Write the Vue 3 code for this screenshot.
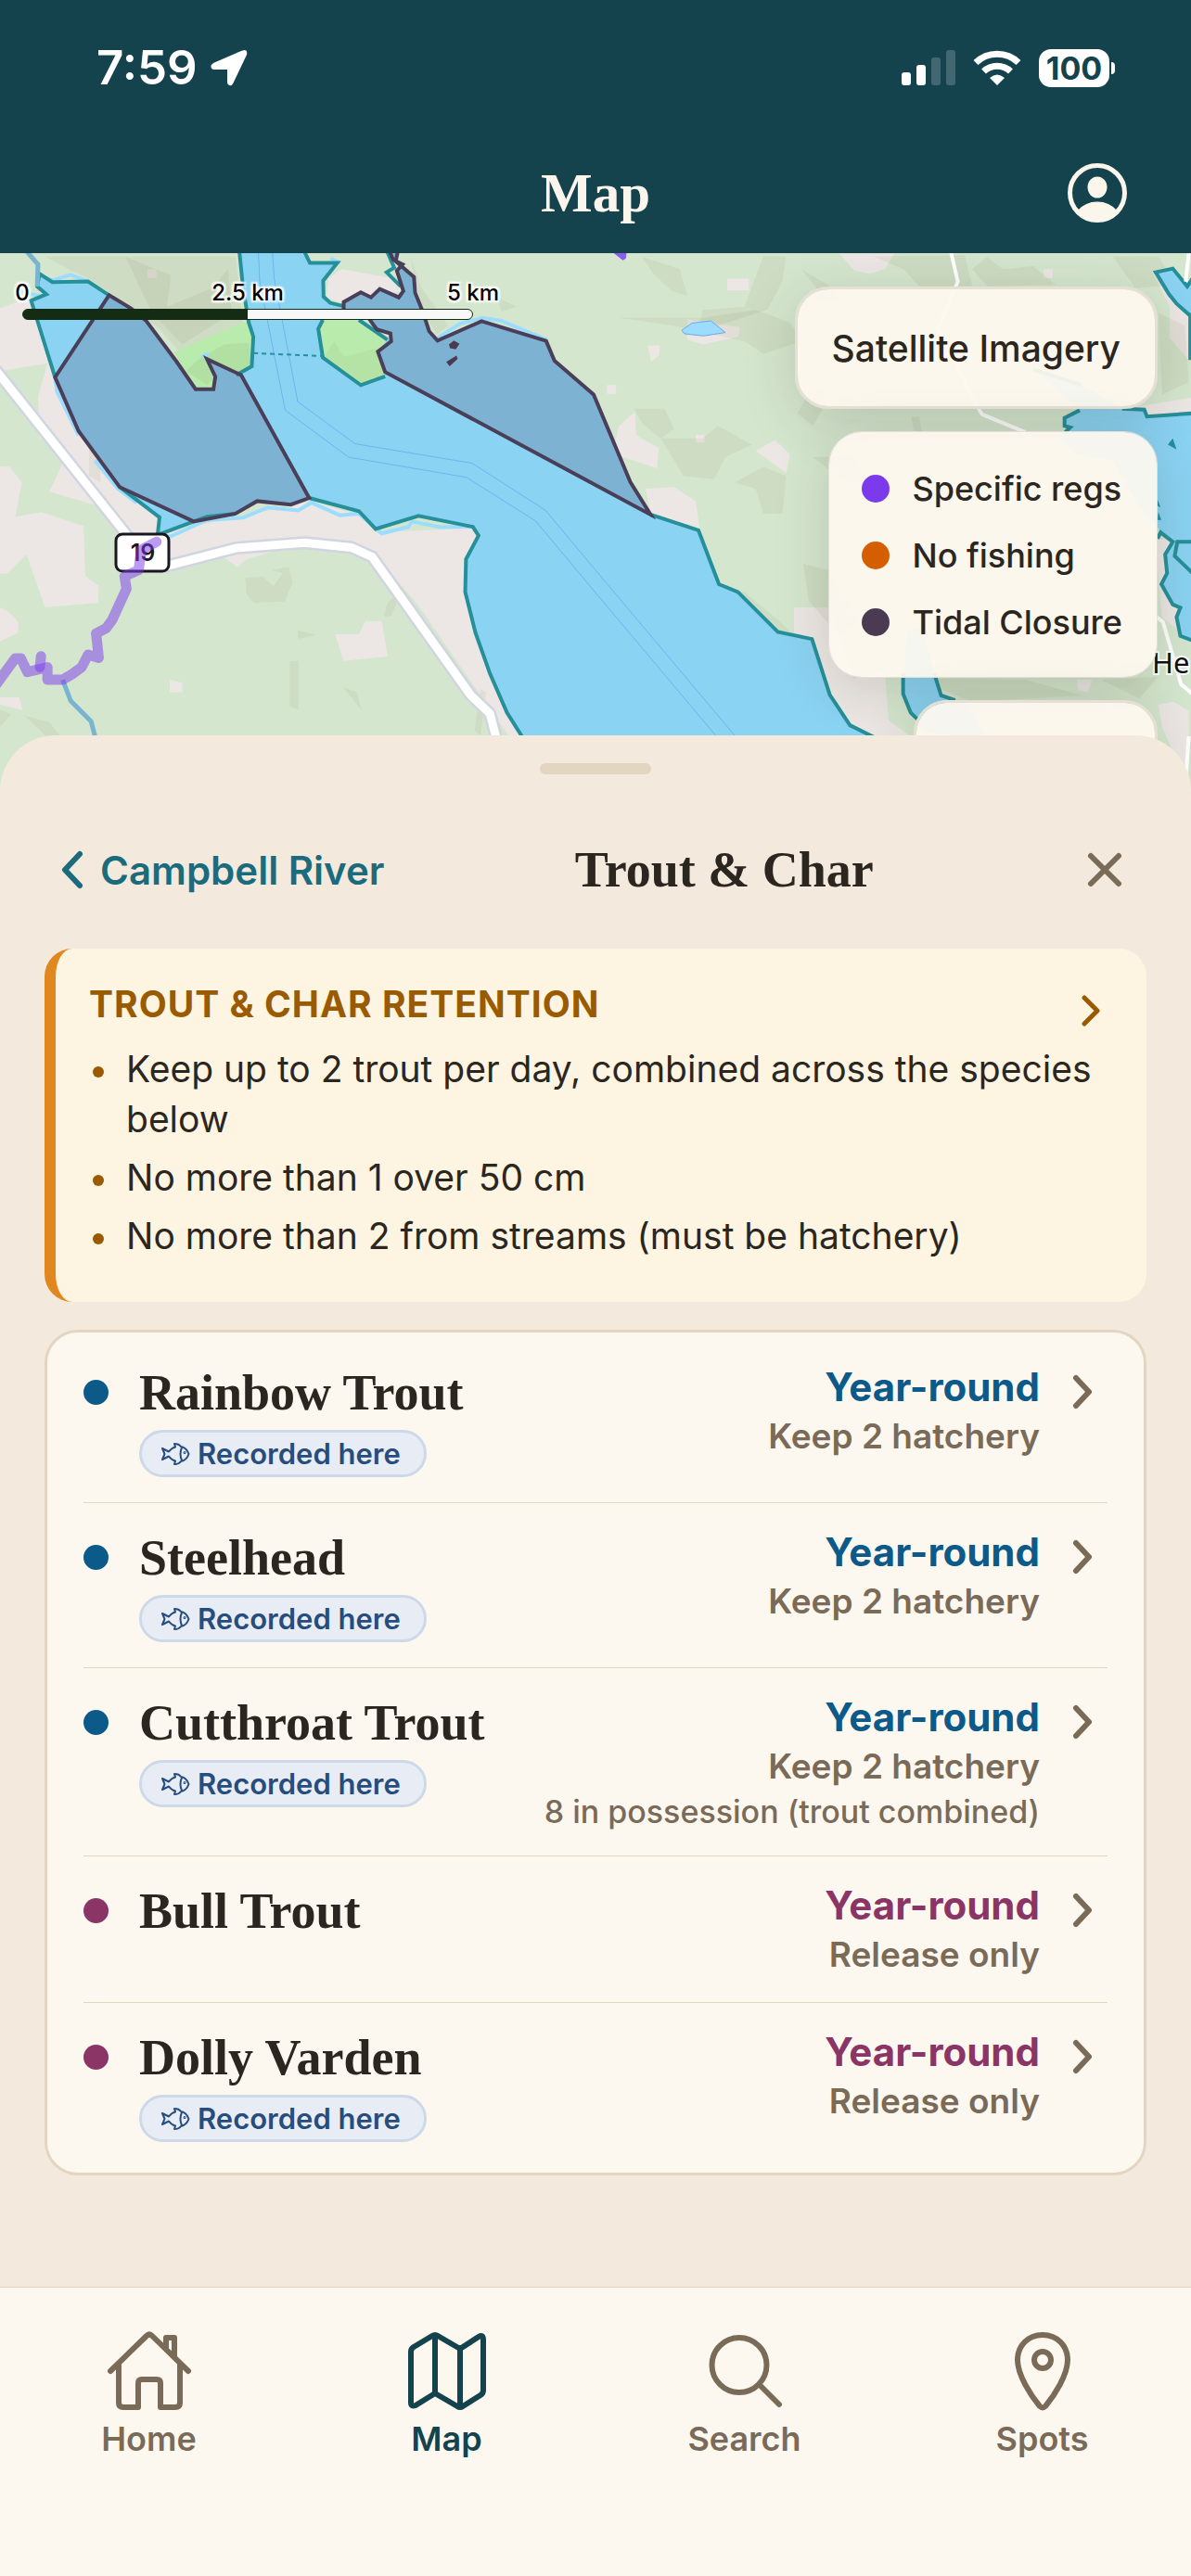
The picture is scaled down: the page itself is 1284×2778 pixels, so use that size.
<template>
  <div class="app">
    <header class="top">
      <div class="status">
        <div class="status-side">
          <span class="time">7:59</span>
          <svg class="arrow" viewBox="0 0 40 40" aria-hidden="true">
            <path d="M36.500 1 Q40 1 39 6 L24.500 36.500 Q23 40 20.500 39 Q18 38.500 18 35 V22 H4 Q0 21.500 0.500 18 Q0.500 16.500 4 14.500 L33 2 Z" fill="#fff" />
          </svg>
        </div>
        <div class="status-side right">
          <svg class="signal" viewBox="0 0 58 38" fill="#fff" aria-hidden="true">
            <rect x="0" y="24" width="10" height="14" rx="3" />
            <rect x="16" y="16" width="10" height="22" rx="3" />
            <rect x="32" y="8" width="10" height="30" rx="3" opacity="0.2" />
            <rect x="48" y="0" width="10" height="38" rx="3" opacity="0.2" />
          </svg>
          <svg class="wifi" viewBox="0 0 52 38" aria-hidden="true">
            <g fill="none" stroke="#fff" stroke-width="7">
              <path d="M3 13.500 A33 33 0 0 1 49 13.500" />
              <path d="M11.500 23 A21 21 0 0 1 40.500 23" />
            </g>
            <path d="M18 30 Q26 23 34 30 L26 38 Z" fill="#fff" />
          </svg>
          <div class="battery">
            <span class="cell">100</span>
            <span class="nub"></span>
          </div>
        </div>
      </div>
      <div class="title-bar">
        <h1>Map</h1>
        <button type="button" class="profile" aria-label="Profile">
          <svg viewBox="0 0 64 64" aria-hidden="true">
            <circle cx="32" cy="32" r="29.500" fill="none" stroke="#fbf6ec" stroke-width="5" />
            <ellipse cx="32" cy="26" rx="10.500" ry="11.500" fill="#fbf6ec" />
            <path d="M11 51 Q19 41.500 32 41.500 Q45 41.500 53 51 A29 29 0 0 1 11 51 Z" fill="#fbf6ec" />
          </svg>
        </button>
      </div>
    </header>

    <section class="map">
      <svg class="tiles" viewBox="0 0 1284 600" preserveAspectRatio="xMidYMin slice" aria-hidden="true">
        <rect width="1284" height="600" fill="#d5e6cf" />
        <g class="geo" transform="translate(0 -3) scale(0.40944 0.33801)">
          <path v-for="(d, i) in builtUp" :key="'b' + i" :d="d" fill="#ece7e4" />
          <path v-for="(d, i) in hills" :key="'h' + i" :d="d" fill="#8f8f66" opacity="0.11" />
          <path d="M458 325 L650 225 670 275 663 370 625 400 545 347 567 403 562 443 515 443Z" fill="#b9ebad" />
          <path d="M490 385 L520 350 590 300 655 295 663 370 625 400 545 347 567 403 545 430Z" fill="#8f9f66" opacity="0.14" />

          <!-- shallow fringe -->
          <path d="M104 85 L140 95 185 78 232 99 M82 140 L125 150 M145 405 L150 450 207 590 M250 670 L310 760 360 805 M415 915 L450 912 545 860 640 853 705 820 785 830 820 805 895 845 945 840 1005 903 1075 882 1085 865 1160 883 1245 882 M870 25 L895 40 M1152 280 L1210 235 1270 215 1320 225 1440 285 M530 340 L550 330" class="fringe" />
          <path :d="strait" fill="#8bd3f3" />
          <path d="M2363 255 L2390 232 2440 225 2478 262 2420 273 2370 266Z" transform="translate(-568 0)" fill="#9bdcff" stroke="#6aa9f0" />
          <path :d="eastWater" fill="#8bd3f3" />
          <path :d="closureWest" class="closure" />
          <path :d="closureEast" class="closure" />
          <path d="M850 222 H945 L1020 285 995 323 1014 402 950 430 850 342 838 250Z" fill="#b9ebad" />
          <path d="M850 345 L880 290 905 340 1000 310 1014 402 950 430Z" fill="#8f9f66" opacity="0.1" />

          <g class="cable">
            <path d="M680 0 L684 100 751 510 918 660 1228 724 1410 863 1568 1092 1900 1570" />
            <path d="M717 0 L722 90 784 483 935 617 1243 679 1436 829 1568 1020 1950 1570" />
          </g>
          <path d="M667 328 L850 337" class="coast dashed" />
          <path v-for="(d, i) in coast" :key="'c' + i" :d="d" class="coast" />
          <path :d="closureWest" class="closure-line" />
          <path :d="closureEast" class="closure-line" />
          <path d="M1182 300 L1195 288 1210 298 1200 316 1185 312Z M1175 356 L1202 336 1205 346 1184 370Z" fill="#4a3a52" />
          <path d="M3088 600 L3098 635 3075 620Z M3048 795 L3056 820 3048 815Z M3050 835 L3058 860 3048 860Z" fill="#26909a" />

          <path d="M-20 368 L345 925 M430 1010 L620 950 802 933 925 948 980 978 1240 1420 1290 1478 1312 1580" class="road-case" />
          <path d="M-20 368 L345 925 M430 1010 L620 950 802 933 925 948 980 978 1240 1420 1290 1478 1312 1580" class="road" />
          <path d="M2503 0 L2522 100 2470 250 2574 500 2586 523 2700 580 M3045 1170 L3062 1185 3110 1385 3145 1420 M3130 1550 L3120 1720 M3130 10 L3122 100" class="lane" />
          <path d="M68 0 L100 45 98 115 M165 1370 L186 1437 240 1503 265 1620" class="river" />
        </g>
        <g class="shield">
          <rect x="125" y="303" width="57" height="40" rx="7" />
          <text x="154" y="332" text-anchor="middle">19</text>
        </g>
        <g transform="translate(0 -3) scale(0.40944 0.33801)">
          <path d="M412 930 L372 955 365 1020 328 1040 333 1080 295 1180 280 1205 253 1222 260 1300 232 1290 215 1330 190 1352 165 1370 125 1370 125 1330 72 1345 55 1302 40 1302 -10 1385" class="regs" />
          <path d="M108 1295 L105 1330" class="regs" />
          <path d="M1615 8 L1650 6 1648 26 1640 32Z" fill="#8a5cf0" />
        </g>
        <text class="place" x="1242" y="453">He</text>
      </svg>

      <div class="scale">
        <div class="scale-labels"><span>0</span><span>2.5 km</span><span>5 km</span></div>
        <div class="scale-bar"></div>
      </div>

      <div class="controls">
        <button type="button" class="panel satellite">Satellite Imagery</button>
        <ul class="panel legend">
          <li v-for="item in legend" :key="item.label">
            <span class="swatch" :style="{ background: item.color }"></span>{{ item.label }}
          </li>
        </ul>
        <div class="panel more"></div>
      </div>
    </section>

    <main class="sheet">
      <div class="handle"></div>
      <div class="sheet-head">
        <button type="button" class="back">
          <svg viewBox="0 0 24 42" aria-hidden="true"><path d="M20 4 L4 21 20 38" /></svg>
          Campbell River
        </button>
        <h2>Trout &amp; Char</h2>
        <button type="button" class="close" aria-label="Close">
          <svg viewBox="0 0 38 38" aria-hidden="true"><path d="M4 4 L34 34 M34 4 L4 34" /></svg>
        </button>
      </div>

      <section class="notice">
        <div class="notice-head">
          <h3>Trout &amp; Char Retention</h3>
          <svg viewBox="0 0 20 34" aria-hidden="true"><path d="M3 3 L17 17 3 31" /></svg>
        </div>
        <ul>
          <li v-for="rule in rules" :key="rule">{{ rule }}</li>
        </ul>
      </section>

      <div class="card">
        <button v-for="fish in species" :key="fish.name" type="button" class="row" :class="fish.kind">
          <span class="dot"></span>
          <span class="who">
            <span class="name">{{ fish.name }}</span>
            <span v-if="fish.recorded" class="badge">
              <svg viewBox="0 0 32 24" aria-hidden="true">
                <path d="M2 6 L9 9.500 Q12 5.500 16 4.500 L15 1 Q20 1 22 4 Q28 5 30.500 12 Q28 19 22 20 Q20 23 15 23 L16 19.500 Q12 18.500 9 14.500 L2 18 L4.500 12 Z M23 5 Q20 12 23 19" />
                <circle cx="26" cy="10.500" r="0.500" />
              </svg>
              Recorded here
            </span>
          </span>
          <span class="info">
            <span class="season">Year-round</span>
            <span class="limit">{{ fish.limit }}</span>
            <span v-if="fish.extra" class="extra">{{ fish.extra }}</span>
          </span>
          <svg class="chev" viewBox="0 0 22 38" aria-hidden="true"><path d="M4 4 L18 19 4 34" /></svg>
        </button>
      </div>
    </main>

    <nav class="tabs">
      <a v-for="tab in tabs" :key="tab.label" href="#" :class="{ active: tab.active }">
        <svg viewBox="0 0 96 96" aria-hidden="true"><path :d="tab.icon" /></svg>
        {{ tab.label }}
      </a>
    </nav>
  </div>
</template>

<script setup>
const legend = [
  { label: "Specific regs", color: "#7c3aed" },
  { label: "No fishing", color: "#d55e00" },
  { label: "Tidal Closure", color: "#4a3a52" },
];

const rules = [
  "Keep up to 2 trout per day, combined across the species below",
  "No more than 1 over 50 cm",
  "No more than 2 from streams (must be hatchery)",
];

const species = [
  { name: "Rainbow Trout", kind: "keep", recorded: true, limit: "Keep 2 hatchery" },
  { name: "Steelhead", kind: "keep", recorded: true, limit: "Keep 2 hatchery" },
  {
    name: "Cutthroat Trout",
    kind: "keep",
    recorded: true,
    limit: "Keep 2 hatchery",
    extra: "8 in possession (trout combined)",
  },
  { name: "Bull Trout", kind: "release", recorded: false, limit: "Release only" },
  { name: "Dolly Varden", kind: "release", recorded: true, limit: "Release only" },
];

const tabs = [
  {
    label: "Home",
    icon: "M6 48 L45 10 Q48 7 51 10 L90 48 M15 40 V82 Q15 87 20 87 H36 V61 Q36 57 40 57 H56 Q60 57 60 61 V87 H76 Q81 87 81 82 V40 M66 24 V12 H75 V33",
  },
  {
    label: "Map",
    active: true,
    icon: "M9 27 Q9 24 12 22 L32 10 Q35 8 38 10 L62 24 82 11 Q87 8 87 14 V69 Q87 72 84 74 L65 86 Q62 88 59 86 L35 72 14 85 Q9 87 9 82 Z M35 9 V72 M62 24 V87",
  },
  {
    label: "Search",
    icon: "M42 12 A29.500 29.500 0 1 1 42 71 A29.500 29.500 0 1 1 42 12 M65 64 L85 84",
  },
  {
    label: "Spots",
    icon: "M48 9 C32 9 21 21 21 36 C21 52 35 74 45 86 Q48 89 51 86 C61 74 75 52 75 36 C75 21 64 9 48 9 Z M48 27 A9 9 0 1 1 48 45 A9 9 0 1 1 48 27",
  },
];

// map geometry, in tile units
const closureWest =
  "M287 143 L345 185 385 225 465 355 515 443 562 443 567 403 545 347 635 398 814 790 766 811 677 800 620 840 510 865 315 755 207 577 145 405Z";
const closureEast =
  "M1048 0 L1042 35 1090 85 1093 135 1113 195 1130 258 1152 288 1268 226 1438 289 1460 352 1563 460 1660 740 1713 843 1014 388 995 323 1030 290 1028 265 992 252 970 215 905 190 905 165 950 134 977 150 1000 123 1050 150 1062 130 1045 65 1060 45 1035 30 1025 0Z";
const strait =
  "M630 0 L640 120 655 230 667 275 663 370 635 398 545 347 567 403 562 443 515 443 385 225 345 185 287 143 232 99 138 101 104 75 98 115 122 140 82 160 100 230 145 405 207 577 315 755 420 852 415 908 510 865 620 840 677 800 766 811 814 790 945 832 989 889 1102 847 1245 882 1260 910 1227 985 1225 1090 1252 1220 1290 1350 1335 1475 1400 1600 2400 1600 2290 1548 2238 1515 2185 1418 2138 1240 2048 1217 1943 1090 1893 1065 1839 893 1713 843 1014 388 995 323 1030 290 992 252 905 178 870 168 852 148 851 97 888 40 816 40 800 0Z";
const eastWater =
  "M3043 70 L3088 58 3126 115 3140 90 V215 L3098 170 3078 140Z M2720 380 L2850 430 2955 505 3013 505 3020 530 3140 520 V1245 L3108 1230 3098 1170 3108 1140 3088 1130 3058 1065 3073 1030 3068 970 3088 930 3056 895 2990 800 2930 670 2830 650 2790 600 2815 565 2800 535 2843 510Z M2388 1215 L2428 1205 2478 1420 2550 1450 2600 1560 2440 1540 2398 1475 2378 1415Z";

const coast = [
  "M630 0 L640 120 655 230 667 275 663 370 622 398",
  "M287 143 L232 99 138 101 104 75 98 115 122 140 82 160 100 230 145 405",
  "M315 755 L420 852 415 908 510 865 545 850 620 840",
  "M814 790 L945 832 989 889 1102 847 1245 882 1260 910 1227 985 1225 1090 1252 1220 1290 1350 1335 1475 1400 1600",
  "M800 0 L816 40 888 40 851 97 852 148 870 168 905 178",
  "M1018 0 L1038 55 1018 70 1055 115",
  "M850 222 L838 250 850 342 950 430 1014 402 M945 222 L1020 285",
  "M1713 843 L1839 893 1893 1065 1943 1090 2048 1217 2138 1240 2185 1418 2238 1515 2330 1570",
  "M3140 90 L3126 115 3088 58 3043 70 3078 140 3098 170 3140 215 M3134 200 V350",
  "M2720 380 L2850 430 M2843 510 L2803 535 2803 560 2818 565 2805 580 M2955 505 L3013 508 3020 530 3140 520",
  "M3048 920 L3056 900 3088 930 3068 970 3073 1030 3058 1065 3088 1130 3108 1140 3098 1170 3108 1230 3140 1245 M3140 930 H3100 L3093 975 3140 1030",
  "M2378 1350 L2378 1415 2398 1475 2415 1495 M2460 1350 L2478 1420 2515 1435",
];

const builtUp = [
  "M0 185 L80 150 140 400 205 580 315 755 415 850 415 905 820 800 945 845 990 900 1245 885 1262 910 1230 990 1228 1100 1260 1230 1400 1600 1345 1560 1100 1130 990 975 790 935 650 985 625 1010 590 980 440 1010 330 900 300 830 130 770 180 640 105 600 100 470 125 360 0 385Z",
  "M0 690 L25 690 58 740 40 850 110 835 220 880 225 1040 260 1070 258 1125 118 1138 70 970 20 1030 0 1032Z",
  "M0 1140 L20 1150 48 1185 48 1220 0 1248Z",
  "M1092 1055 H1116 V1083 H1092Z",
  "M882 1225 H945 L962 1183 H1005 L1021 1296 905 1310Z",
  "M447 1370 L480 1380 480 1410 447 1410Z M0 1426 H50 L60 1467 0 1450Z M388 60 H412 V88 H388Z",
  "M900 60 L1040 90 1060 130 905 170 860 150 865 90Z",
  "M1700 760 L1775 755 1832 800 1842 890 1893 1065 1943 1090 1870 1040 1810 900 1713 843Z",
  "M1630 560 L1672 515 1675 590 1735 630 1730 695 1640 660 1615 640Z M1990 640 L2040 605 2080 650 2070 710Z M2210 1380 L2330 1340 2340 1500 2420 1570 2290 1550 2230 1500Z",
  "M1915 90 H1972 V128 H1915Z M1705 303 H1738 L1735 335 1715 355Z M1598 430 H1622 V458 H1598Z M1832 588 H1855 V613 H1832Z M1810 220 L1948 245 1945 275 1850 300 1810 285Z",
  "M2091 1140 H2185 L2250 1380 2300 1540 2220 1500 2180 1400 2138 1240 2091 1220Z",
  "M2210 10 H2355 L2330 60 2290 75 2250 65Z M2748 60 H2772 V88 H2748Z M3030 60 L3130 210 3130 350 3080 280 3080 180Z",
  "M2930 510 L3140 470 V525 L3000 530Z M3040 920 L3140 930 V1250 L3060 1170Z M3050 1450 L3090 1440 3130 1470 V1720 L3060 1520Z M2835 1370 H2875 L2865 1410 2840 1405Z",
];

const hills = [
  "M120 20 H620 L640 230 470 320 420 250 330 170 240 95 180 60Z",
  "M330 20 L450 80 440 180 560 120 600 60 610 200 480 300 400 200Z",
  "M645 1045 L690 1040 720 1070 745 1030 715 1020 760 1010 770 1060 750 1120 670 1126 650 1100Z",
  "M763 1310 H786 V1466 L763 1455Z M785 1213 L832 1226 785 1240Z M905 1396 L940 1410 952 1467Z M1020 1125 L1060 1080 1030 1168 1010 1168Z",
  "M65 1485 L130 1505 158 1548 120 1548Z M0 1465 L30 1480 0 1520Z",
  "M235 630 L260 650 265 740 235 720Z M1265 1400 L1280 1410 1265 1548 1250 1530Z",
  "M1690 20 L1790 60 1810 145 1770 130 1720 75Z M2010 20 H2070 L2060 100 2020 190 1840 260 1850 190 1960 180Z",
  "M1630 215 H1850 L1990 190 2080 230 2110 290 2010 330 1960 290 1770 240Z M2110 60 L2180 110 2210 160 2110 170 2150 120Z",
  "M1670 505 H1750 L1775 570 1740 600 1690 550Z M1740 600 L1850 600 1890 560 1980 620 1910 660 1880 730 1800 720Z",
  "M1935 740 L2010 690 2070 720 2060 840 2010 840 1990 760Z M2140 660 L2240 655 2300 760 2250 760Z M2115 1000 L2180 1020 2260 1180 2210 1230 2130 1120Z",
  "M2300 20 L2540 15 2560 115 2420 115 2380 60Z M2560 60 L2600 20 2640 60 2720 50 2780 110 2600 115Z M2930 20 H3050 L3100 110 2990 120Z",
  "M2400 530 H2420 L2430 590 2410 600Z M2140 430 L2190 460 2140 560 2100 520Z",
  "M1920 1090 L1960 1090 2040 1170 2080 1215 2048 1217Z M3050 200 L3120 240 3130 420 3060 460Z",
  "M1310 150 L1360 180 1320 195Z M1080 20 L1110 120 1180 240 1150 270 1110 190Z",
  "M2400 1365 L2700 1370 2850 1420 2560 1440Z M2900 1370 L3050 1360 3000 1430Z",
];
</script>

<style>
html,
body {
  margin: 0;
  background: #fdf8ef;
}
</style>

<style scoped>
.app {
  min-height: 100vh;
  display: flex;
  flex-direction: column;
  background: #f3eadd;
  color: #2b2620;
  font-family: Inter, "Liberation Sans", sans-serif;
}

button {
  margin: 0;
  padding: 0;
  border: none;
  background: none;
  color: inherit;
  font: inherit;
}

h1,
h2,
h3,
ul {
  margin: 0;
  padding: 0;
}

ul {
  list-style: none;
}

svg {
  display: block;
  flex: none;
}

/* header */
.top {
  background: #14424d;
  color: #fbf6ec;
  padding-bottom: 33px;
}

.status {
  display: flex;
  align-items: center;
  justify-content: space-between;
  padding: 42px 82px 0 104px;
  height: 62px;
  margin-bottom: 72px;
  color: #fff;
}

.status-side {
  display: flex;
  align-items: center;
  gap: 14px;
}

.status-side.right {
  gap: 19px;
}

.time {
  font-size: 51px;
  font-weight: 600;
  line-height: 62px;
}

.arrow {
  width: 40px;
  height: 40px;
}

.signal {
  width: 58px;
  height: 38px;
}

.wifi {
  width: 52px;
  height: 38px;
}

.battery {
  display: flex;
  align-items: center;
  gap: 2px;
}

.cell {
  width: 76px;
  height: 41px;
  border-radius: 13px;
  background: #fff;
  color: #14424d;
  font-size: 34px;
  font-weight: 700;
  line-height: 41px;
  text-align: center;
}

.nub {
  width: 4px;
  height: 13px;
  border-radius: 0 6px 6px 0;
  background: #fff;
}

.title-bar {
  display: grid;
  grid-template-columns: 1fr auto 1fr;
  align-items: center;
  padding: 0 69px;
  height: 64px;
}

.title-bar h1 {
  grid-column: 2;
  font-family: "Liberation Serif", serif;
  font-size: 59px;
  font-weight: 700;
  line-height: 64px;
}

.profile {
  justify-self: end;
}

.profile svg {
  width: 64px;
  height: 64px;
}

/* map */
.map {
  position: relative;
  height: 580px;
  overflow: hidden;
}

.tiles {
  width: 100%;
  height: 600px;
}

.tiles path {
  vector-effect: non-scaling-stroke;
}

.closure {
  fill: #7eb2d3;
}

.closure-line,
.coast,
.cable,
.road,
.road-case,
.lane,
.river,
.regs,
.fringe {
  fill: none;
}

.closure-line {
  stroke: #4a3f59;
  stroke-width: 4px;
}

.coast {
  stroke: #26909a;
  stroke-width: 4px;
}

.dashed {
  stroke-width: 2px;
  stroke-dasharray: 5px 4px;
}

.cable {
  stroke: #6fb4f0;
  stroke-width: 1px;
}

.fringe {
  stroke: #9bdcff;
  stroke-width: 4px;
}

.road-case {
  stroke: #d0d5e0;
  stroke-width: 14px;
}

.road {
  stroke: #fff;
  stroke-width: 9px;
}

.lane {
  stroke: #fff;
  stroke-width: 4px;
}

.river {
  stroke: #7ab5cf;
  stroke-width: 5px;
}

.regs {
  stroke: #7c3aed;
  stroke-width: 11px;
  stroke-linecap: round;
  stroke-linejoin: round;
  opacity: 0.5;
}

.shield rect {
  fill: #fff;
  stroke: #17171f;
  stroke-width: 3px;
}

.shield text {
  font-size: 25px;
  font-weight: 600;
  fill: #17171f;
}

.place {
  font-family: "Noto Sans", sans-serif;
  font-size: 31px;
  fill: #111;
  stroke: #fff;
  stroke-width: 4px;
  paint-order: stroke;
}

.scale {
  position: absolute;
  top: 28px;
  left: 24px;
  width: 486px;
}

.scale-labels {
  display: flex;
  justify-content: space-between;
  margin-bottom: 3px;
  color: #000;
  font-size: 24px;
  font-weight: 500;
  line-height: 29px;
  white-space: nowrap;
  text-shadow: 0 0 3px #fff, 2px 2px 2px #fff, -2px -2px 2px #fff, 2px -2px 2px #fff, -2px 2px 2px #fff;
}

.scale-labels span {
  display: flex;
  justify-content: center;
  width: 0;
}

.scale-bar {
  height: 10px;
  border: 1px solid #142c14;
  border-radius: 6px;
  background: linear-gradient(to right, #142c14 50%, #f8f8f8 50%);
}

.controls {
  position: absolute;
  top: 36px;
  right: 36px;
  display: flex;
  flex-direction: column;
  align-items: flex-end;
  gap: 24px;
}

.panel {
  border: 3px solid #e6dfd3;
  border-radius: 36px;
  background: rgba(253, 248, 239, 0.94);
  background-clip: padding-box;
  box-shadow: 0 12px 60px rgba(40, 40, 20, 0.16);
}

.satellite {
  padding: 0 37px;
  height: 132px;
  font-size: 39px;
  font-weight: 500;
}

.legend {
  border-width: 1px;
  padding: 25px 37px 23px 35px;
}

.legend li {
  display: flex;
  align-items: center;
  gap: 24px;
  font-size: 36px;
  font-weight: 500;
  line-height: 72px;
}

.swatch {
  width: 30px;
  height: 30px;
  border-radius: 50%;
}

.more {
  width: 257px;
  height: 130px;
}

/* sheet */
.sheet {
  position: relative;
  flex: 1;
  margin-top: -60px;
  padding: 30px 48px 120px;
  border-radius: 60px 60px 0 0;
  background: #f3eadd;
}

.handle {
  width: 120px;
  height: 12px;
  margin: 0 auto;
  border-radius: 6px;
  background: #e3d6c0;
}

.sheet-head {
  display: flex;
  align-items: center;
  height: 88px;
  padding: 59px 1px 41px 18px;
}

.back {
  display: flex;
  align-items: center;
  gap: 18px;
  color: #1a6b7c;
  font-size: 42px;
  font-weight: 600;
}

.back svg {
  width: 24px;
  height: 42px;
}

.back path,
.close path,
.notice path,
.chev path {
  fill: none;
  stroke: currentColor;
  stroke-width: 6px;
  stroke-linecap: round;
  stroke-linejoin: round;
}

.sheet-head h2 {
  flex: 1;
  font-family: "Liberation Serif", serif;
  font-size: 54px;
  font-weight: 700;
  line-height: 64px;
  text-align: center;
}

.close {
  display: flex;
  align-items: center;
  justify-content: center;
  width: 88px;
  height: 88px;
  color: #7a6a58;
}

.close svg {
  width: 38px;
  height: 38px;
}

.notice {
  padding: 36px 50px 35px 36px;
  border-left: 12px solid #e0871f;
  border-radius: 30px;
  background: #fdf4e1;
  margin-bottom: 30px;
}

.notice-head {
  display: flex;
  align-items: flex-end;
  justify-content: space-between;
  margin-bottom: 19px;
  color: #9a5b00;
}

.notice h3 {
  font-size: 39px;
  font-weight: 700;
  line-height: 48px;
  letter-spacing: 1px;
  text-transform: uppercase;
}

.notice svg {
  width: 20px;
  height: 34px;
}

.notice path {
  stroke-width: 5px;
}

.notice li {
  position: relative;
  padding-left: 40px;
  margin-bottom: 9px;
  font-size: 39px;
  line-height: 54px;
}

.notice li::before {
  content: "";
  position: absolute;
  top: 24px;
  left: 4px;
  width: 12px;
  height: 12px;
  border-radius: 50%;
  background: #9a5b00;
}

.card {
  padding: 6px 39px;
  border: 3px solid #e3d6c0;
  border-radius: 36px;
  background: #fdf8ef;
}

.row {
  display: flex;
  align-items: flex-start;
  width: 100%;
  padding: 27px 16px 25px 0;
  border-bottom: 1px solid #e3d6c0;
  text-align: left;
}

.row:last-child {
  border-bottom: none;
}

.dot {
  flex: none;
  width: 27px;
  height: 27px;
  margin: 18px 33px 0 0;
  border-radius: 50%;
  background: currentColor;
}

.keep {
  color: #0b5a8a;
}

.release {
  color: #8a3566;
}

.who {
  display: flex;
  flex-direction: column;
  align-items: flex-start;
  gap: 8px;
  flex: 1;
  padding-bottom: 2px;
  white-space: nowrap;
}

.name {
  color: #2b2620;
  font-family: "Liberation Serif", serif;
  font-size: 54px;
  font-weight: 700;
  line-height: 64px;
}

.badge {
  display: flex;
  align-items: center;
  gap: 8px;
  padding: 0 25px 0 20px;
  border: 3px solid #cdd9e8;
  border-radius: 26px;
  background: #e8edf5;
  color: #274d7e;
  font-size: 31px;
  font-weight: 600;
  line-height: 45px;
}

.badge svg {
  width: 32px;
  height: 24px;
}

.badge path,
.badge circle {
  fill: none;
  stroke: currentColor;
  stroke-width: 2px;
  stroke-linejoin: round;
}

.info {
  display: flex;
  flex-direction: column;
  align-items: flex-end;
  white-space: nowrap;
}

.season {
  font-size: 42px;
  font-weight: 700;
  line-height: 52px;
}

.limit {
  color: #7a6a58;
  font-size: 37px;
  font-weight: 600;
  line-height: 53px;
}

.extra {
  color: #7a6a58;
  font-size: 34px;
  font-weight: 500;
  line-height: 45px;
}

.chev {
  width: 22px;
  height: 38px;
  margin: 12px 0 0 35px;
  color: #7a6a58;
}

/* tab bar */
.tabs {
  display: grid;
  grid-template-columns: repeat(4, 1fr);
  padding: 42px 0 126px;
  border-top: 1px solid #e3d6c0;
  background: #fdf8ef;
}

.tabs a {
  display: flex;
  flex-direction: column;
  align-items: center;
  gap: 3px;
  color: #7a6a58;
  font-size: 36px;
  font-weight: 600;
  line-height: 44px;
  text-decoration: none;
}

.tabs a.active {
  color: #14424d;
}

.tabs svg {
  width: 96px;
  height: 96px;
}

.tabs path {
  fill: none;
  stroke: currentColor;
  stroke-width: 6px;
  stroke-linecap: round;
  stroke-linejoin: round;
}
</style>
